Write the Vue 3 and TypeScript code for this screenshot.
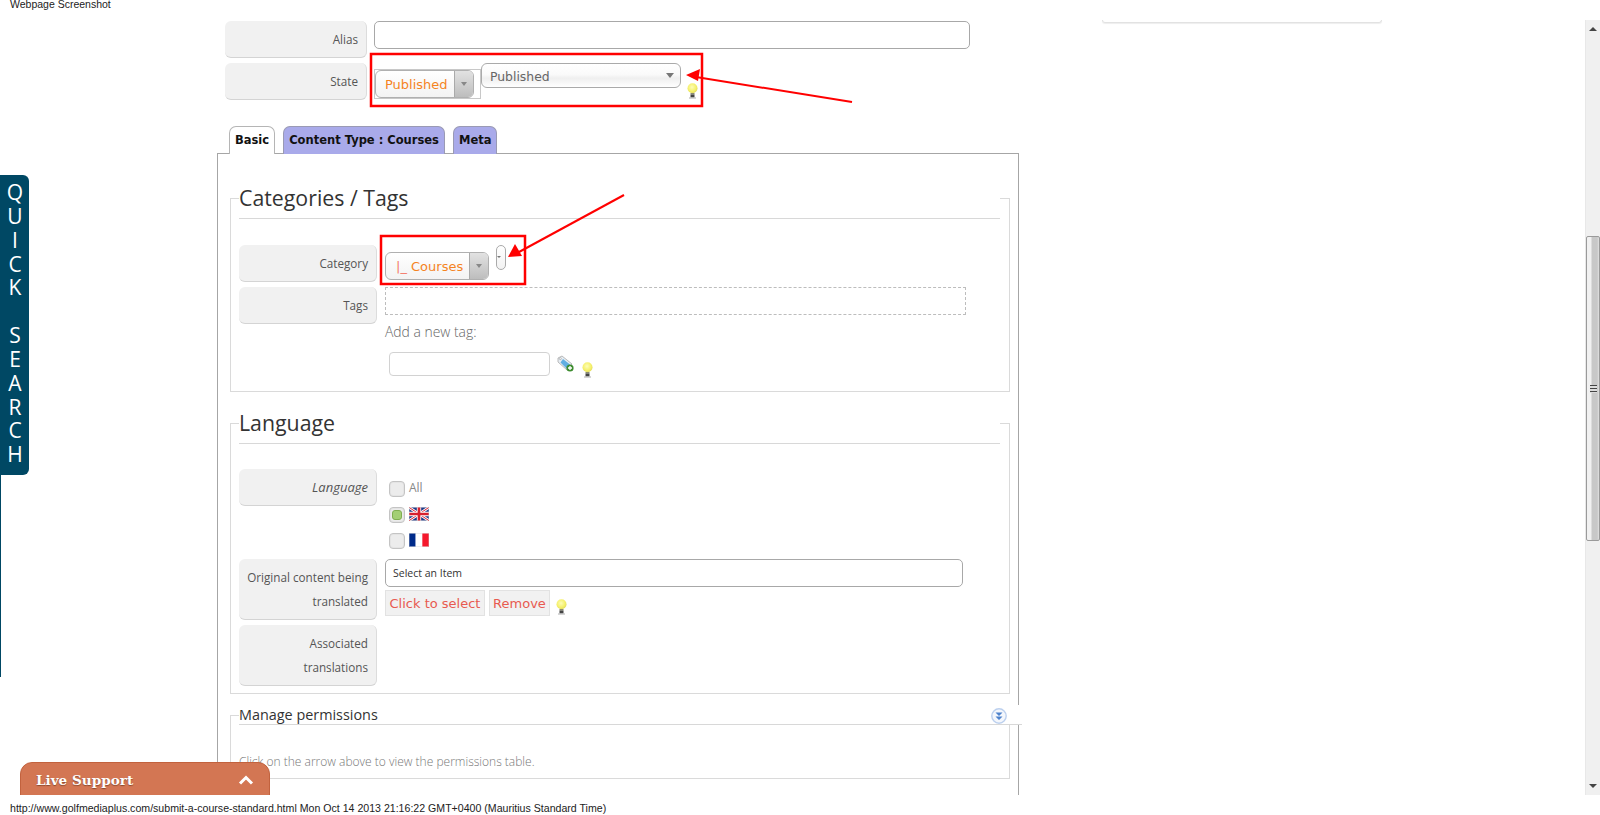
<script setup lang="ts">
const sidebarLetters: string[] = ['Q', 'U', 'I', 'C', 'K', '\u00a0', 'S', 'E', 'A', 'R', 'C', 'H']
</script>

<template>
  <div class="page">
    <svg class="defs" width="0" height="0" aria-hidden="true">
      <defs>
        <radialGradient id="bulbGlow" cx="45%" cy="40%" r="60%">
          <stop offset="0" stop-color="#fdfdb8" />
          <stop offset="0.7" stop-color="#f5f06a" />
          <stop offset="1" stop-color="#e2dc60" />
        </radialGradient>
        <symbol id="bulb" viewBox="0 0 11 16">
          <circle cx="5.5" cy="5.2" r="5" fill="url(#bulbGlow)" />
          <rect x="3.5" y="10" width="4" height="1.5" fill="#8a8a70" />
          <rect x="3.5" y="11.5" width="4" height="3" fill="#444" />
          <rect x="2" y="14" width="7" height="2" fill="#bbb" opacity="0.6" />
        </symbol>
      </defs>
    </svg>

    <header class="print-head">Webpage Screenshot</header>

    <div class="viewport">
      <main class="main">
        <div class="column">
          <div class="top-row">
            <label class="label">Alias</label>
            <input class="text-input alias" type="text" />
          </div>
          <div class="top-row">
            <label class="label">State</label>
            <div class="state-box">
              <div class="styled-select state-select">
                <span class="styled-value">Published</span>
                <span class="styled-arrow"><i class="caret"></i></span>
              </div>
            </div>
            <div class="plain-select">
              <span>Published</span>
              <i class="caret"></i>
            </div>
            <svg class="bulb state-bulb"><use href="#bulb" /></svg>
          </div>

          <nav class="tabs">
            <span class="tab active">Basic</span>
            <span class="tab">Content Type : Courses</span>
            <span class="tab">Meta</span>
          </nav>

          <section class="panel">
            <fieldset class="group categories">
              <legend class="legend">Categories / Tags</legend>
              <div class="row category-row">
                <label class="label wide">Category</label>
                <div class="category-field">
                  <div class="styled-select category-select">
                    <span class="styled-value"><span class="dash">|_</span> Courses</span>
                    <span class="styled-arrow"><i class="caret"></i></span>
                  </div>
                  <div class="pill"><i class="caret tiny"></i></div>
                </div>
              </div>
              <div class="row">
                <label class="label wide">Tags</label>
                <div class="tags-field">
                  <div class="tag-drop"></div>
                  <p class="add-tag">Add a new tag:</p>
                  <div class="tag-entry">
                    <input class="tag-input" type="text" />
                    <svg class="tag-icon" viewBox="0 0 17 17">
                      <path d="M1 3 5 1l10 8-5 6L1 7z" fill="#e6edf3" stroke="#a9a9a9" stroke-width="0.8" />
                      <path d="M6 4l7 5.5-3.5 4L3.5 7.5z" fill="#62aee2" />
                      <circle cx="3.3" cy="3.6" r="1" fill="#fff" stroke="#888" stroke-width="0.5" />
                      <circle cx="13" cy="13" r="3.6" fill="#3d8c2f" />
                      <path d="M13 11v4M11 13h4" stroke="#fff" stroke-width="1.3" />
                    </svg>
                    <svg class="bulb"><use href="#bulb" /></svg>
                  </div>
                </div>
              </div>
            </fieldset>

            <fieldset class="group language">
              <legend class="legend">Language</legend>
              <div class="row language-row">
                <label class="label wide"><em class="italic">Language</em></label>
                <div class="choices">
                  <div class="choice">
                    <span class="check"></span>
                    <span class="all">All</span>
                  </div>
                  <div class="choice">
                    <span class="check on"></span>
                    <svg class="flag" viewBox="0 0 60 40">
                      <rect width="60" height="40" fill="#1f3a87" />
                      <path d="M0 0l60 40M60 0L0 40" stroke="#fff" stroke-width="8" />
                      <path d="M0 0l60 40M60 0L0 40" stroke="#d8202e" stroke-width="3" />
                      <path d="M30 0v40M0 20h60" stroke="#fff" stroke-width="13" />
                      <path d="M30 0v40M0 20h60" stroke="#d8202e" stroke-width="8" />
                      <rect x="0.5" y="0.5" width="59" height="39" fill="none" stroke="#ccc" />
                    </svg>
                  </div>
                  <div class="choice">
                    <span class="check"></span>
                    <svg class="flag" viewBox="0 0 60 40">
                      <rect width="20" height="40" fill="#002b8a" />
                      <rect x="20" width="20" height="40" fill="#fff" />
                      <rect x="40" width="20" height="40" fill="#f5182c" />
                      <rect x="0.5" y="0.5" width="59" height="39" fill="none" stroke="#ccc" />
                    </svg>
                  </div>
                </div>
              </div>
              <div class="row">
                <label class="label wide tall"><span>Original content being<br />translated</span></label>
                <div class="original">
                  <div class="item-box">Select an Item</div>
                  <div class="actions">
                    <button class="action select-btn" type="button">Click to select</button>
                    <button class="action remove-btn" type="button">Remove</button>
                    <svg class="bulb"><use href="#bulb" /></svg>
                  </div>
                </div>
              </div>
              <div class="row last">
                <label class="label wide tall"><span>Associated<br />translations</span></label>
              </div>
            </fieldset>

            <fieldset class="group permissions">
              <legend class="legend small">
                Manage permissions
                <svg class="toggle" viewBox="0 0 16 16">
                  <circle cx="8" cy="8" r="7.2" fill="#f4f7fc" stroke="#bcd0ee" stroke-width="1.4" />
                  <path d="M4.5 4.5h7L8 8z M4.5 8.5h7L8 12z" fill="#4d82cc" />
                </svg>
              </legend>
              <p class="perm-note">Click on the arrow above to view the permissions table.</p>
            </fieldset>
          </section>
        </div>
        <aside class="side-card"></aside>
      </main>

      <div class="scrollbar">
        <i class="sb-arrow up"></i>
        <div class="sb-track">
          <div class="sb-thumb"><span class="grip"></span></div>
        </div>
        <i class="sb-arrow down"></i>
      </div>

      <div class="quick-search">
        <span v-for="(letter, i) in sidebarLetters" :key="i">{{ letter }}</span>
      </div>
      <div class="quick-edge"></div>

      <div class="live-support">
        <span>Live Support</span>
        <svg class="chevron" viewBox="0 0 16 10">
          <path d="M2 8.5 8 2.5l6 6" fill="none" stroke="#fff" stroke-width="3" />
        </svg>
      </div>
    </div>

    <footer class="print-foot">http://www.golfmediaplus.com/submit-a-course-standard.html Mon Oct 14 2013 21:16:22 GMT+0400 (Mauritius Standard Time)</footer>

    <svg class="annotations" viewBox="0 0 1600 815">
      <rect x="371" y="54" width="331" height="52" />
      <rect x="381" y="236" width="144" height="48" />
      <path class="line" d="M852 102 696 77" />
      <path class="head" d="M686 75 700 69 698 81z" />
      <path class="line" d="M624 195 519 252" />
      <path class="head" d="M508 257 515 244 522 256z" />
    </svg>
  </div>
</template>

<style>
html,
body {
  margin: 0;
  background: #fff;
  overflow: hidden;
}
</style>

<style scoped>
.page {
  position: relative;
  width: 1600px;
  height: 815px;
  overflow: hidden;
  display: flex;
  flex-direction: column;
  background: #fff;
  font-family: "Open Sans", "Liberation Sans", sans-serif;
  color: #555;
}
.defs {
  position: absolute;
}
.print-head {
  height: 20px;
  flex: none;
  padding-left: 10px;
  font: 10.5px/9px "Liberation Sans", sans-serif;
  color: #222;
}
.print-foot {
  height: 20px;
  flex: none;
  padding-left: 10px;
  font: 10.6px/27px "Liberation Sans", sans-serif;
  color: #222;
}
.viewport {
  position: relative;
  flex: 1;
  min-height: 0;
  display: flex;
  overflow: hidden;
}
.main {
  flex: 1;
  min-width: 0;
  display: flex;
  padding-left: 217px;
  gap: 83px;
}
.column {
  width: 802px;
  flex: none;
  display: flex;
  flex-direction: column;
}
.top-row {
  display: flex;
  gap: 7px;
  margin: 0 0 5px 8px;
  align-items: flex-start;
}
.top-row:first-child {
  margin-top: 1px;
}
.label {
  box-sizing: border-box;
  width: 142px;
  min-height: 37px;
  flex: none;
  padding: 0 8px 0 0;
  display: flex;
  align-items: center;
  justify-content: flex-end;
  text-align: right;
  background: #f1f1f1;
  border-radius: 6px;
  border-right: 1px solid #dcdcdc;
  border-bottom: 1px solid #d4d4d4;
  font-size: 11.7px;
  line-height: 24px;
  color: #555;
}
.label.wide {
  width: 138px;
}
.label.tall {
  min-height: 61px;
}
.italic {
  font-size: 13px;
}
.text-input,
.item-box {
  box-sizing: border-box;
  border: 1px solid #a8a8a8;
  border-radius: 5px;
  background: #fff;
  outline: none;
}
.alias {
  width: 596px;
  height: 28px;
  padding: 0;
}
.state-box {
  box-sizing: border-box;
  width: 107px;
  height: 30px;
  margin: 6px 0 0;
  border: 1px solid #c8c8c8;
}
.styled-select {
  box-sizing: border-box;
  display: flex;
  height: 28px;
  border: 1px solid #b0b0b0;
  border-radius: 6px;
  overflow: hidden;
  background: linear-gradient(#fff, #f3f3f3);
}
.state-select {
  width: 99px;
}
.styled-value {
  flex: 1;
  min-width: 0;
  padding-left: 9px;
  font: 13px/28px "DejaVu Sans", "Liberation Sans", sans-serif;
  color: #f5841f;
  white-space: nowrap;
}
.styled-arrow {
  flex: none;
  width: 18px;
  display: flex;
  align-items: center;
  justify-content: center;
  border-left: 1px solid #aaa;
  background: linear-gradient(#e2e2e2, #bdbdbd);
}
.caret {
  display: block;
  width: 0;
  height: 0;
  border-left: 4px solid transparent;
  border-right: 4px solid transparent;
  border-top: 5px solid #777;
}
.styled-arrow .caret {
  border-left-width: 3px;
  border-right-width: 3px;
  border-top-width: 4px;
  border-top-color: #888;
}
.caret.tiny {
  border-left-width: 2px;
  border-right-width: 2px;
  border-top-width: 2px;
}
.plain-select {
  box-sizing: border-box;
  width: 200px;
  height: 25px;
  margin-left: -7px;
  padding: 2px 6px 0 8px;
  display: flex;
  align-items: center;
  justify-content: space-between;
  border: 1px solid #aaa;
  border-radius: 6px;
  background: linear-gradient(#fff 0, #fafafa 45%, #efefef 62%, #fff 100%);
  font: 12.4px/20px "DejaVu Sans", "Liberation Sans", sans-serif;
  color: #666;
}
.plain-select .caret {
  margin-top: -2px;
}
.bulb {
  display: block;
  flex: none;
  width: 11px;
  height: 16px;
}
.state-bulb {
  margin: 20px 0 0 -1px;
}
.tabs {
  display: flex;
  gap: 8px;
  margin: 21px 0 0;
  padding-left: 12px;
  height: 27px;
  box-sizing: border-box;
}
.tab {
  box-sizing: border-box;
  height: 28px;
  padding: 0 5px;
  border: 1px solid #9a9ab4;
  border-bottom: 0;
  border-radius: 7px 7px 0 0;
  background: #a9aaea;
  font: bold 11.5px/27px "DejaVu Sans", "Liberation Sans", sans-serif;
  color: #111;
  white-space: nowrap;
  position: relative;
  z-index: 1;
}
.tab.active {
  background: #fff;
  border-color: #b5b5b5;
}
.panel {
  flex: 1;
  min-height: 0;
  box-sizing: border-box;
  border: 1px solid #a6a6a6;
  border-bottom: 0;
  padding: 24px 8px 0 12px;
}
.group {
  margin: 0 0 11px;
  padding: 0 8px;
  min-width: 0;
  border: 1px solid #dadada;
}
.legend {
  box-sizing: border-box;
  width: 761px;
  height: 41px;
  padding: 0;
  margin: 0;
  border-bottom: 1px solid #d8d8d8;
  background: #fff;
  font-size: 21.3px;
  line-height: 40px;
  color: #333;
  font-weight: 400;
}
.legend.small {
  position: relative;
  width: 783px;
  height: 20px;
  font-size: 14.4px;
  line-height: 20px;
}
.toggle {
  position: absolute;
  right: 15px;
  top: 3px;
  width: 16px;
  height: 16px;
}
.row {
  display: flex;
  gap: 8px;
  margin-bottom: 5px;
  align-items: flex-start;
}
.row.last {
  margin-bottom: 7px;
}
.category-row {
  padding-top: 26px;
}
.category-field {
  display: flex;
  gap: 7px;
  align-items: flex-start;
}
.category-select {
  width: 104px;
  margin-top: 7px;
}
.category-select .styled-value {
  padding-left: 10px;
}
.dash {
  color: #f47a6a;
}
.pill {
  box-sizing: border-box;
  width: 10px;
  height: 25px;
  border: 1px solid #aaa;
  border-radius: 5px;
  padding: 10px 0 0 0;
  background: linear-gradient(#fff, #f2f2f2);
}
.tags-field {
  display: flex;
  flex-direction: column;
}
.tag-drop {
  box-sizing: border-box;
  width: 581px;
  height: 28px;
  border: 1px dashed #bdbdbd;
}
.add-tag {
  margin: 5px 0 0;
  font-size: 13.9px;
  font-weight: 300;
  line-height: 24px;
  color: #666;
}
.tag-entry {
  display: flex;
  align-items: flex-start;
  padding: 8px 0 8px 4px;
}
.tag-input {
  box-sizing: border-box;
  width: 161px;
  height: 24px;
  border: 1px solid #d2d2d2;
  border-radius: 4px;
  background: #fff;
  outline: none;
  padding: 0;
}
.tag-icon {
  display: block;
  width: 17px;
  height: 17px;
  margin: 3px 0 0 7px;
}
.tag-entry .bulb {
  margin: 10px 0 0 8px;
}
.language-row {
  padding-top: 25px;
  margin-bottom: 10px;
}
.choices {
  padding: 12px 0 0 4px;
  display: flex;
  flex-direction: column;
  gap: 10px;
}
.choice {
  display: flex;
  align-items: flex-start;
  gap: 4px;
  height: 16px;
}
.check {
  position: relative;
  box-sizing: border-box;
  display: block;
  width: 16px;
  height: 16px;
  border: 1px solid #c4c4c4;
  border-radius: 4px;
  background: #ececec;
  box-shadow: inset 0 0 0 1px #e4e4e4;
}
.check.on::after {
  content: "";
  position: absolute;
  inset: 2px;
  border-radius: 3px;
  background: #a3cf74;
  border: 1px solid #7fae50;
  box-sizing: border-box;
}
.all {
  font-size: 12px;
  line-height: 14px;
  color: #888;
}
.flag {
  display: block;
  width: 20px;
  height: 14px;
}
.original {
  display: flex;
  flex-direction: column;
  gap: 3px;
}
.item-box {
  width: 578px;
  height: 28px;
  padding-left: 7px;
  font-size: 10.5px;
  line-height: 26px;
  color: #333;
}
.actions {
  display: flex;
  gap: 4px;
  align-items: flex-start;
}
.action {
  box-sizing: border-box;
  height: 26px;
  padding: 1px 0 0;
  border: 1px solid #e2e2e2;
  background: #f1f1f1;
  font: 13px/24px "DejaVu Sans", "Liberation Sans", sans-serif;
  color: #e85a50;
  white-space: nowrap;
}
.select-btn {
  width: 100px;
}
.remove-btn {
  width: 61px;
}
.actions .bulb {
  margin: 9px 0 0 2px;
}
.permissions {
  height: 74px;
  box-sizing: border-box;
}
.perm-note {
  margin: 29px 0 0;
  font-size: 12px;
  font-weight: 300;
  line-height: 16px;
  color: #777;
}
.side-card {
  width: 280px;
  height: 3px;
  box-sizing: border-box;
  border: 1px solid #e2e2e2;
  border-top: 0;
  border-radius: 0 0 5px 5px;
  box-shadow: 0 1px 1px #eee;
}
.scrollbar {
  width: 15px;
  flex: none;
  display: flex;
  flex-direction: column;
  align-items: center;
  background: #f0f0f0;
  border-left: 1px solid #e8e8e8;
  box-sizing: border-box;
}
.sb-arrow {
  display: block;
  flex: none;
  width: 0;
  height: 0;
  margin: 7px 0;
  border-left: 4px solid transparent;
  border-right: 4px solid transparent;
}
.sb-arrow.up {
  border-bottom: 4px solid #444;
}
.sb-arrow.down {
  border-top: 4px solid #444;
}
.sb-track {
  flex: 1;
  width: 100%;
  padding-top: 198px;
  box-sizing: border-box;
}
.sb-thumb {
  box-sizing: border-box;
  height: 305px;
  border: 1px solid #9a9a9a;
  border-radius: 2px;
  background: linear-gradient(90deg, #f1f1f1 0 30%, #c8c8c8 45% 85%, #e2e2e2 100%);
  display: flex;
  align-items: center;
  justify-content: center;
}
.grip {
  display: block;
  width: 7px;
  height: 8px;
  background: repeating-linear-gradient(#444 0 1px, #ddd 1px 3px);
}
.quick-search {
  position: absolute;
  left: 0;
  top: 155px;
  width: 29px;
  height: 300px;
  box-sizing: border-box;
  padding: 6px 0 0 1px;
  display: flex;
  flex-direction: column;
  align-items: center;
  background: #004864;
  border-radius: 0 6px 6px 0;
  color: #fff;
  font-size: 21px;
  line-height: 23.85px;
}
.quick-edge {
  position: absolute;
  left: 0;
  top: 455px;
  width: 1px;
  height: 202px;
  background: #004864;
}
.live-support {
  position: absolute;
  left: 20px;
  bottom: -30px;
  width: 250px;
  height: 63px;
  box-sizing: border-box;
  padding: 0 15px 28px 15px;
  display: flex;
  align-items: center;
  justify-content: space-between;
  background: #d37653;
  border: 1px solid #c2623e;
  border-radius: 12px 12px 0 0;
  font: bold 13.6px/20px "DejaVu Serif", "Liberation Serif", serif;
  color: #fff;
  text-shadow: 0 1px 1px #8a4a30;
}
.chevron {
  width: 16px;
  height: 10px;
}
.annotations {
  position: absolute;
  left: 0;
  top: 0;
  width: 1600px;
  height: 815px;
  pointer-events: none;
}
.annotations rect {
  fill: none;
  stroke: #f00;
  stroke-width: 2.5;
}
.annotations .line {
  fill: none;
  stroke: #f00;
  stroke-width: 2;
}
.annotations .head {
  fill: #f00;
}
</style>
